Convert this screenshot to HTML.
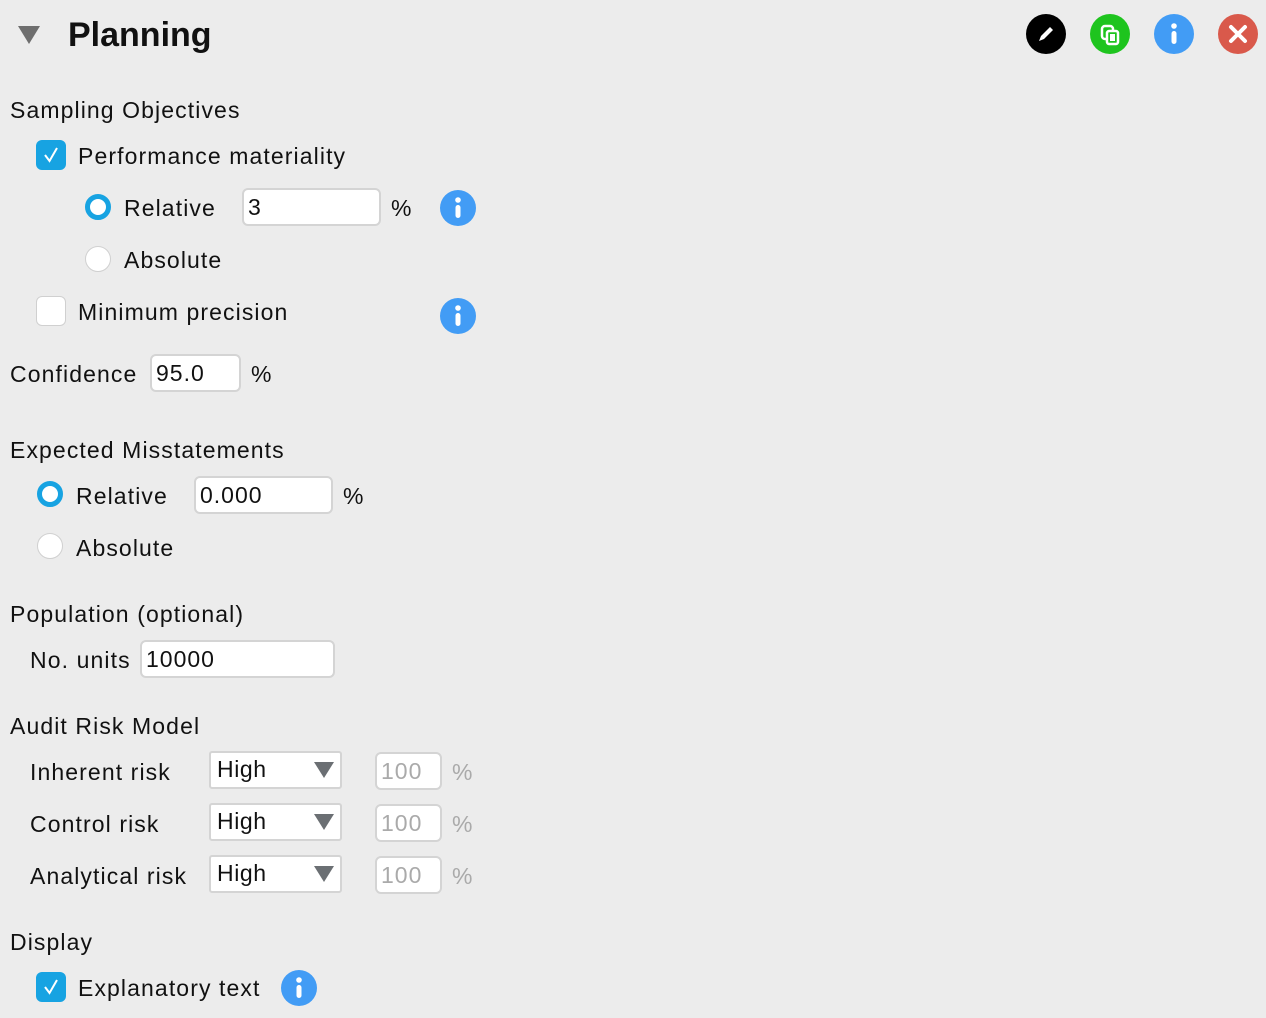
<!DOCTYPE html>
<html><head><meta charset="utf-8"><style>
body{margin:0;width:1266px;height:1018px;background:#ececec;font-family:"Liberation Sans",sans-serif;color:#111;overflow:hidden;position:relative}
.t{position:absolute;font-size:23px;line-height:26px;white-space:nowrap;letter-spacing:1.1px}
.cb{position:absolute;width:30px;height:30px;border-radius:6px;box-sizing:border-box}
.on{background:#17a3e2}
.off{background:#fff;border:1px solid #d0d0d0}
.rad{position:absolute;width:26px;height:26px;border-radius:50%;box-sizing:border-box}
.ron{border:5px solid #17a3e2;background:#fff}
.roff{border:1px solid #d0d0d0;background:#fff}
.in{position:absolute;background:#fff;border:2px solid #d4d4d4;border-radius:6px;box-sizing:border-box;font-size:23px;line-height:35px;padding-left:4px;letter-spacing:1px}
.dis{color:#aaa}
.sel{position:absolute;background:#fff;border:2px solid #d4d4d4;border-radius:3px;box-sizing:border-box;font-size:23px;line-height:32px;padding-left:6px;letter-spacing:0.6px}
.sel:after{content:"";position:absolute;right:6px;top:9px;border-left:10px solid transparent;border-right:10px solid transparent;border-top:16px solid #6b6f73}
.info{position:absolute;width:36px;height:36px}
</style></head><body>
<svg style="position:absolute;left:18px;top:26px" width="24" height="20"><polygon points="0,0 22,0 11,18" fill="#6e6e6e"/></svg>
<div style="position:absolute;left:68px;top:15px;font-size:34px;font-weight:bold;line-height:40px">Planning</div>

<svg style="position:absolute;left:1026px;top:14px" width="240" height="40">
<circle cx="20" cy="20" r="20" fill="#000"/>
<path d="M13 27 L15 22 L24 13 L27 16 L18 25 Z" fill="#fff"/>
<circle cx="84" cy="20" r="20" fill="#1ec41e"/>
<rect x="76" y="12" width="11" height="13" rx="3" fill="none" stroke="#fff" stroke-width="2.5"/>
<rect x="81" y="17" width="11" height="13" rx="2" fill="#1ec41e" stroke="#fff" stroke-width="2.5"/>
<rect x="84" y="20" width="5" height="7" fill="#fff"/>
<circle cx="148" cy="20" r="20" fill="#429cf5"/>
<circle cx="148" cy="12" r="2.8" fill="#fff"/><rect x="145.5" y="17" width="5" height="13" rx="2.5" fill="#fff"/>
<circle cx="212" cy="20" r="20" fill="#d9594b"/>
<path d="M205 13 L219 27 M219 13 L205 27" stroke="#fff" stroke-width="4" stroke-linecap="round"/>
</svg>

<div class="t" style="left:10px;top:97px">Sampling Objectives</div>
<div class="cb on" style="left:36px;top:140px"><svg width="30" height="30"><path d="M9 15 L13.5 21 L21 8" stroke="#fff" stroke-width="2" fill="none"/></svg></div>
<div class="t" style="left:78px;top:143px">Performance materiality</div>
<div class="rad ron" style="left:85px;top:194px"></div>
<div class="t" style="left:124px;top:195px">Relative</div>
<div class="in" style="left:242px;top:188px;width:139px;height:38px">3</div>
<div class="t" style="left:391px;top:195px">%</div>
<svg class="info" style="left:440px;top:190px"><circle cx="18" cy="18" r="18" fill="#429cf5"/><circle cx="18" cy="10" r="2.8" fill="#fff"/><rect x="15.5" y="15" width="5" height="13" rx="2.5" fill="#fff"/></svg>
<div class="rad roff" style="left:85px;top:246px"></div>
<div class="t" style="left:124px;top:247px">Absolute</div>
<div class="cb off" style="left:36px;top:296px"></div>
<div class="t" style="left:78px;top:299px">Minimum precision</div>
<svg class="info" style="left:440px;top:298px"><circle cx="18" cy="18" r="18" fill="#429cf5"/><circle cx="18" cy="10" r="2.8" fill="#fff"/><rect x="15.5" y="15" width="5" height="13" rx="2.5" fill="#fff"/></svg>

<div class="t" style="left:10px;top:361px">Confidence</div>
<div class="in" style="left:150px;top:354px;width:91px;height:38px">95.0</div>
<div class="t" style="left:251px;top:361px">%</div>

<div class="t" style="left:10px;top:437px">Expected Misstatements</div>
<div class="rad ron" style="left:37px;top:481px"></div>
<div class="t" style="left:76px;top:483px">Relative</div>
<div class="in" style="left:194px;top:476px;width:139px;height:38px">0.000</div>
<div class="t" style="left:343px;top:483px">%</div>
<div class="rad roff" style="left:37px;top:533px"></div>
<div class="t" style="left:76px;top:535px">Absolute</div>

<div class="t" style="left:10px;top:601px">Population (optional)</div>
<div class="t" style="left:30px;top:647px">No. units</div>
<div class="in" style="left:140px;top:640px;width:195px;height:38px">10000</div>

<div class="t" style="left:10px;top:713px">Audit Risk Model</div>
<div class="t" style="left:30px;top:759px">Inherent risk</div>
<div class="sel" style="left:209px;top:751px;width:133px;height:38px">High</div>
<div class="in dis" style="left:375px;top:752px;width:67px;height:38px">100</div>
<div class="t dis" style="left:452px;top:759px">%</div>
<div class="t" style="left:30px;top:811px">Control risk</div>
<div class="sel" style="left:209px;top:803px;width:133px;height:38px">High</div>
<div class="in dis" style="left:375px;top:804px;width:67px;height:38px">100</div>
<div class="t dis" style="left:452px;top:811px">%</div>
<div class="t" style="left:30px;top:863px">Analytical risk</div>
<div class="sel" style="left:209px;top:855px;width:133px;height:38px">High</div>
<div class="in dis" style="left:375px;top:856px;width:67px;height:38px">100</div>
<div class="t dis" style="left:452px;top:863px">%</div>

<div class="t" style="left:10px;top:929px">Display</div>
<div class="cb on" style="left:36px;top:972px"><svg width="30" height="30"><path d="M9 15 L13.5 21 L21 8" stroke="#fff" stroke-width="2" fill="none"/></svg></div>
<div class="t" style="left:78px;top:975px">Explanatory text</div>
<svg class="info" style="left:281px;top:970px"><circle cx="18" cy="18" r="18" fill="#429cf5"/><circle cx="18" cy="10" r="2.8" fill="#fff"/><rect x="15.5" y="15" width="5" height="13" rx="2.5" fill="#fff"/></svg>
</body></html>
